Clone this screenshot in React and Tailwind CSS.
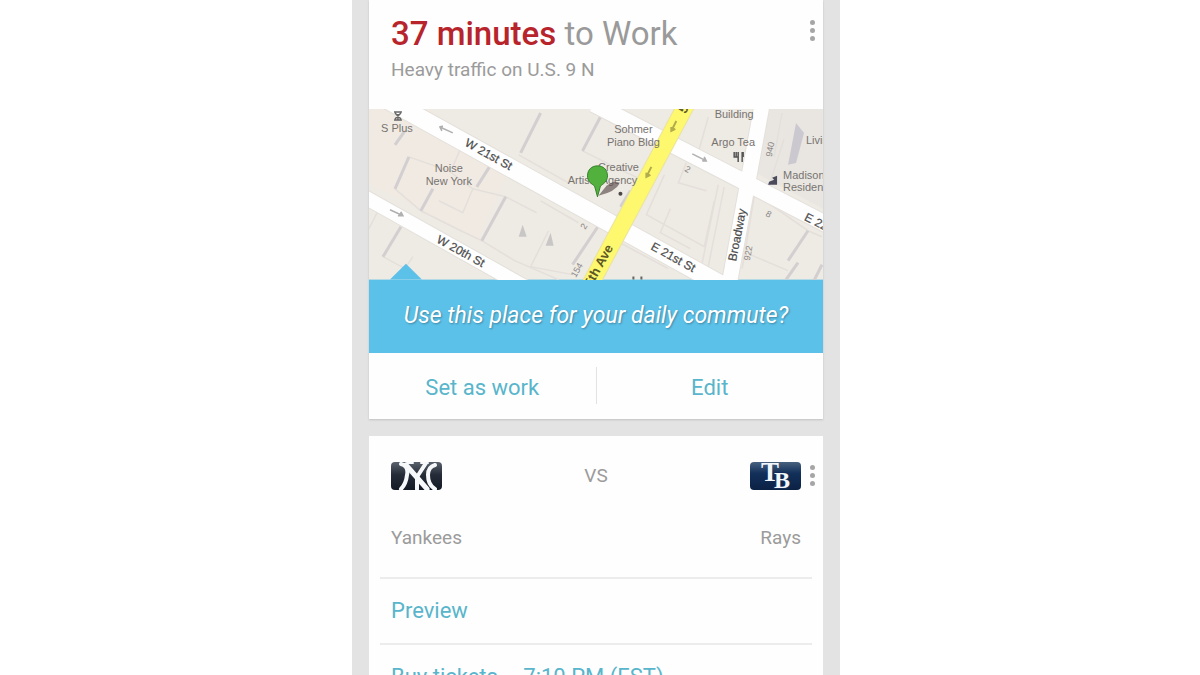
import React from 'react';

const roads = [
  { id: 'w20', x1: -10, y1: 85, x2: 170, y2: 186, width: 14 },
  { id: 'w21', x1: -10, y1: -25, x2: 380, y2: 191, width: 18 },
  { id: 'w22', x1: 225, y1: -5, x2: 465, y2: 119, width: 16 },
  { id: 'broadway', x1: 395, y1: -10, x2: 360, y2: 181, width: 15 },
];

const buildings = [
  'M40 48 L26 80', 'M122 56 L108 78', 'M137 88 L113 132', 'M64 80 L52 102', 'M32 118 L14 148', 'M172 4 L152 44',
  'M234 4 L214 42', 'M232 114 L204 156', 'M36 22 L26 36', 'M262 82 L252 98', 'M440 122 L420 152',
  'M454 156 L446 172', 'M430 154 L418 171',
];

const outlines = [
  'M26 80 L52 102 L92 122 L113 132 L146 152 L190 171',
  'M40 48 L80 62 L104 80 L137 88 L168 104',
  'M94 34 L84 58 M104 80 L94 104 L70 92',
  'M150 46 L200 74 M214 42 L250 60 L276 72',
  'M172 92 L210 114 M180 122 L162 158 L204 166',
  'M240 128 L300 160 M252 122 L236 168',
  'M318 54 L310 74 L338 82 M302 100 L292 124 L322 140',
  'M296 66 L278 106 L336 138 L346 92',
  'M356 78 L340 158 M350 76 L334 154',
  'M386 88 L374 160 M400 94 L440 122 L454 128',
  'M382 146 L420 162 M416 30 L400 80 L430 94',
  'M340 8 L330 44 L372 62 M414 4 L406 48',
  'M14 148 L36 160 L44 148 M8 104 L0 120',
];

const places = [
  { text: 'S Plus', x: 28, y: 23 },
  { text: 'Noise', x: 80, y: 63 },
  { text: 'New York', x: 80, y: 76 },
  { text: 'Sohmer', x: 265, y: 24 },
  { text: 'Piano Bldg', x: 265, y: 37 },
  { text: 'Creative', x: 250, y: 62 },
  { text: 'Artists Agency', x: 234, y: 75 },
  { text: 'Building', x: 366, y: 9 },
  { text: 'Argo Tea', x: 365, y: 37 },
];

const streets = [
  { text: 'W 21st St', x: 118, y: 49, angle: 29 },
  { text: 'W 20th St', x: 90, y: 146, angle: 29 },
  { text: 'E 21st St', x: 303, y: 152, angle: 29 },
  { text: 'E 22nd St', x: 459, y: 123, angle: 27 },
  { text: 'Broadway', x: 373, y: 127, angle: -79 },
];

const numbers = [
  { text: '2', x: 318, y: 63, angle: 29 },
  { text: '2', x: 218, y: 119, angle: -60 },
  { text: '8', x: 399, y: 108, angle: 29 },
  { text: '922', x: 383, y: 145, angle: -79 },
  { text: '940', x: 405, y: 41, angle: -79 },
  { text: '154', x: 211, y: 163, angle: -60 },
];

function MenuButton({ label }) {
  return (
    <button type="button" aria-label={label} className="flex h-7 w-[22px] flex-col items-center justify-center gap-[3px]">
      <span className="h-[5px] w-[5px] rounded-full bg-[#a6a6a6]" />
      <span className="h-[5px] w-[5px] rounded-full bg-[#a6a6a6]" />
      <span className="h-[5px] w-[5px] rounded-full bg-[#a6a6a6]" />
    </button>
  );
}

function StreetMap() {
  return (
    <svg viewBox="0 0 455 171" className="-mb-px block w-full" fontFamily='"Liberation Sans", Arial, sans-serif' role="img" aria-label="Map">
      <rect width="455" height="171" fill="#eeeae4" />
      <path d="M0 0 H60 L140 62 L110 130 L0 75 Z" fill="#f0eae3" />
      <path d="M395 0 H455 V100 L380 60 Z" fill="#e9e6e2" />

      {/* Buildings */}
      {outlines.map((d) => (
        <path key={d} d={d} fill="none" stroke="#e4dfda" strokeWidth="1.5" />
      ))}
      {buildings.map((d) => (
        <path key={d} d={d} fill="none" stroke="#d3cfd1" strokeWidth="3" />
      ))}
      <path d="M428 14 L436 24 L428 54 L420 56 Z" fill="#cbc8d0" />
      <path d="M154 116 L158 128 L150 128 Z M182 124 L185 137 L177 137 Z" fill="#c9c6c6" />

      {/* Roads */}
      {roads.map((r) => (
        <line key={r.id} x1={r.x1} y1={r.y1} x2={r.x2} y2={r.y2} stroke="#e4e0db" strokeWidth={r.width + 2} />
      ))}
      {roads.map((r) => (
        <line key={r.id} x1={r.x1} y1={r.y1} x2={r.x2} y2={r.y2} stroke="#fefefe" strokeWidth={r.width} />
      ))}
      <line x1="321" y1="-10" x2="218" y2="183" stroke="#ebe3a0" strokeWidth="18" />
      <line x1="321" y1="-10" x2="218" y2="183" stroke="#fdf86e" strokeWidth="16" />

      {/* One-way arrows */}
      <g stroke="#b0b0b0" strokeWidth="1.5" fill="#b0b0b0">
        <path d="M84 24 L71 18 M74 17 L71 18 L73 22" />
        <path d="M21 101 L34 107 M29 107 L34 107 L32 103" />
        <path d="M324 45 L338 52 M334 52 L338 52 L336 48" />
      </g>
      <g stroke="#b3ac4c" strokeWidth="2" fill="#b3ac4c">
        <path d="M278 68 L283 58 M278 64 L278 68 L282 66" />
        <path d="M303 22 L308 12 M303 18 L303 22 L307 20" />
      </g>

      <g fontSize="11" fill="#77736f" textAnchor="middle">
        {places.map((p) => (
          <text key={p.text} x={p.x} y={p.y}>{p.text}</text>
        ))}
      </g>
      <g fontSize="11" fill="#77736f">
        <text x="438" y="35">Living</text>
        <text x="415" y="70">Madison</text>
        <text x="415" y="82">Residences</text>
      </g>
      <g fontSize="12" fill="#4c4c4c" stroke="#4c4c4c" strokeWidth="0.2" textAnchor="middle">
        {streets.map((s) => (
          <text key={s.text} transform={`translate(${s.x} ${s.y}) rotate(${s.angle})`}>{s.text}</text>
        ))}
      </g>
      <g fontSize="9" fill="#8a8784" textAnchor="middle">
        {numbers.map((n) => (
          <text key={`${n.text}-${n.x}`} transform={`translate(${n.x} ${n.y}) rotate(${n.angle})`}>{n.text}</text>
        ))}
      </g>
      <g fontSize="13" fontWeight="bold" fill="#5d5926" textAnchor="middle">
        <text transform="translate(234 159) rotate(-61)">5th Ave</text>
        <text transform="translate(319 2) rotate(-61)">5</text>
      </g>

      {/* Points of interest */}
      <path d="M25 3 H33 M26 4 L32 10 M32 4 L26 10 M29 5 V11 M25 11 H33" stroke="#666" strokeWidth="1.5" />
      <path d="M368 43 V48 M370 43 V53 M366 43 V48 H370 M374 43 V53 M375 43 V48" stroke="#555" strokeWidth="1.5" fill="none" />
      <path d="M400 76 L401 73 L406 71 L404 69 L409 67 V76 Z" fill="#4b4b5c" />
      <path d="M265 168 V171 M273 168 V171" stroke="#666" strokeWidth="2" />
      <circle cx="252" cy="85" r="2" fill="#4c4746" />

      {/* Pin */}
      <path d="M230 87 L238 77 Q248 70 251 75 Q247 83 230 87 Z" fill="#5b4a4a" opacity="0.65" />
      <path d="M229 88 L226 77 C221 74 219 71 219 67 C219 61 223 57 229 57 C235 57 239 61 239 67 C239 71 237 74 232 77 Z" fill="#52b13c" stroke="#33802a" strokeWidth="1" />

      <path d="M21 171 L37 155 L53 171 Z" fill="#5bc1e9" />
    </svg>
  );
}

function YankeesLogo() {
  return (
    <svg width="51" height="28" viewBox="0 0 51 28" role="img" aria-label="Yankees logo">
      <defs>
        <linearGradient id="nyBg" x1="0" y1="0" x2="0" y2="1">
          <stop offset="0" stopColor="#5a626d" />
          <stop offset="0.45" stopColor="#252c38" />
          <stop offset="1" stopColor="#141a25" />
        </linearGradient>
        <clipPath id="nyClip">
          <rect width="51" height="28" rx="4" />
        </clipPath>
      </defs>
      <g clipPath="url(#nyClip)">
        <rect width="51" height="28" fill="url(#nyBg)" />
        <g fill="none" stroke="#f6f8fa" strokeLinecap="round">
          <path d="M10 2 Q18 4 16 13 Q15 22 10 27" strokeWidth="4" />
          <path d="M15 3 L36 27" strokeWidth="5" />
          <path d="M35 1 L26 15 V27" strokeWidth="4" />
          <path d="M44 3 Q37 5 37 13 Q37 23 44 27" strokeWidth="4" />
          <path d="M30 1 H37 M16 1 H22" strokeWidth="2" />
        </g>
      </g>
    </svg>
  );
}

function RaysLogo() {
  return (
    <svg width="51" height="28" viewBox="0 0 51 28" role="img" aria-label="Rays logo">
      <defs>
        <linearGradient id="tbBg" x1="0" y1="0" x2="0" y2="1">
          <stop offset="0" stopColor="#49617f" />
          <stop offset="0.4" stopColor="#12305a" />
          <stop offset="1" stopColor="#0c2144" />
        </linearGradient>
      </defs>
      <rect width="51" height="28" rx="4" fill="url(#tbBg)" />
      <g fontFamily='"Liberation Serif", serif' fontWeight="bold" fill="#f3f7fb" textAnchor="middle">
        <text x="20" y="19" fontSize="27">T</text>
        <text x="32" y="26" fontSize="24" stroke="#12305a" strokeWidth="2" paintOrder="stroke">B</text>
      </g>
    </svg>
  );
}

function CommuteCard() {
  return (
    <section className="bg-[#fefefe] shadow-[0_1px_2px_rgba(0,0,0,0.15)]">
      <div className="flex items-start justify-between pt-3.5 pb-[27px] pl-[22px]">
        <div>
          <h1 className="text-[33px] leading-10 text-[#9a9a9a]">
            <span className="font-medium text-[#b8242b]">37 minutes</span> to Work
          </h1>
          <p className="mt-1 text-[19px] leading-6 text-[#9b9b9b]">Heavy traffic on U.S. 9 N</p>
        </div>
        <div className="pt-0.5">
          <MenuButton label="Commute options" />
        </div>
      </div>
      <StreetMap />
      <p className="bg-[#5bc1e9] py-5 text-center text-[23px] leading-[34px] text-white italic [text-shadow:1px_1px_2px_rgba(0,0,0,0.3)]">
        Use this place for your daily commute?
      </p>
      <div className="flex items-center pt-3.5 pb-[15px] text-[22px] text-[#58b5cb]">
        <button type="button" className="h-[37px] flex-1 border-r border-[#e2e2e2] pt-1">Set as work</button>
        <button type="button" className="h-[37px] flex-1 pt-1">Edit</button>
      </div>
    </section>
  );
}

function GameCard() {
  return (
    <section className="bg-[#fefefe] px-[11px] pt-[26px]">
      <div className="flex items-center">
        <div className="flex flex-1 items-center justify-between pl-[11px]">
          <YankeesLogo />
          <span className="text-[19px] text-[#9b9b9b]">VS</span>
          <RaysLogo />
        </div>
        <div className="-mr-[11px]">
          <MenuButton label="Game options" />
        </div>
      </div>
      <div className="flex justify-between px-[11px] pt-9 pb-[27px] text-[19px] leading-6 text-[#9b9b9b]">
        <span>Yankees</span>
        <span>Rays</span>
      </div>
      <a href="#preview" className="block border-t-2 border-[#ececec] px-[11px] py-4 text-[22px] leading-8 text-[#58b5cb]">
        Preview
      </a>
      <a href="#tickets" className="block border-t-2 border-[#ececec] px-[11px] py-4 text-[22px] leading-8 text-[#58b5cb]">
        Buy tickets – 7:10 PM (EST)
      </a>
    </section>
  );
}

export default function App() {
  return (
    <div className="h-screen overflow-hidden bg-white pr-2 font-[Roboto,sans-serif]">
      <main className="mx-auto flex min-h-full max-w-[488px] flex-col gap-[17px] bg-[#e3e3e3] px-4 sm:px-[17px]">
        <CommuteCard />
        <GameCard />
      </main>
    </div>
  );
}
